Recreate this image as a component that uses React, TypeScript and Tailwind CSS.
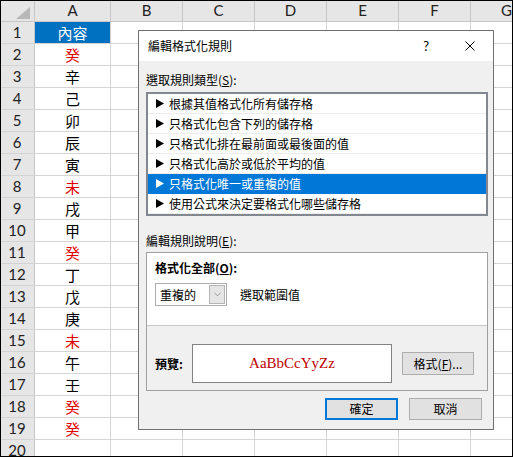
import { ChevronDown } from "lucide-react";

const cells: { text: string; red?: boolean }[] = [
  { text: "內容" },
  { text: "癸", red: true },
  { text: "辛" },
  { text: "己" },
  { text: "卯" },
  { text: "辰" },
  { text: "寅" },
  { text: "未", red: true },
  { text: "戌" },
  { text: "甲" },
  { text: "癸", red: true },
  { text: "丁" },
  { text: "戊" },
  { text: "庚" },
  { text: "未", red: true },
  { text: "午" },
  { text: "壬" },
  { text: "癸", red: true },
  { text: "癸", red: true },
  { text: "" },
];

const rules = [
  "根據其值格式化所有儲存格",
  "只格式化包含下列的儲存格",
  "只格式化排在最前面或最後面的值",
  "只格式化高於或低於平均的值",
  "只格式化唯一或重複的值",
  "使用公式來決定要格式化哪些儲存格",
];

const cjk = { fontFamily: '"Noto Sans CJK TC", "Noto Sans", sans-serif' };
const latin = { fontFamily: 'Lato, "Noto Sans", sans-serif' };

function Tri({ white }: { white?: boolean }) {
  return (
    <svg width="8" height="9" viewBox="0 0 8 9" className="shrink-0">
      <path d="M0 0 L8 4.5 L0 9 Z" fill={white ? "#ffffff" : "#000000"} />
    </svg>
  );
}

function Sheet() {
  const plain = "w-[72px] shrink-0 h-full border-r border-[#d4d4d4]";
  return (
    <div className="flex flex-col">
      <div className="flex h-[22px] bg-[#e6e6e6] border-b border-[#c6c6c6] text-[15px] text-[#222]" style={latin}>
        <div className="w-[35px] shrink-0 h-full border-r border-[#c6c6c6] flex items-end justify-end pr-[4px] pb-[2px]">
          <svg width="14" height="12" viewBox="0 0 14 12">
            <path d="M14 0 L14 12 L0 12 Z" fill="#b8b8b8" />
          </svg>
        </div>
        <div className="w-[76px] shrink-0 flex items-center justify-center border-r border-[#c6c6c6]">A</div>
        <div className="w-[72px] shrink-0 flex items-center justify-center border-r border-[#c6c6c6]">B</div>
        <div className="w-[72px] shrink-0 flex items-center justify-center border-r border-[#c6c6c6]">C</div>
        <div className="w-[72px] shrink-0 flex items-center justify-center border-r border-[#c6c6c6]">D</div>
        <div className="w-[72px] shrink-0 flex items-center justify-center border-r border-[#c6c6c6]">E</div>
        <div className="w-[72px] shrink-0 flex items-center justify-center border-r border-[#c6c6c6]">F</div>
        <div className="w-[72px] shrink-0 flex items-center justify-center border-r border-[#c6c6c6]">G</div>
      </div>
      {cells.map((c, i) => (
        <div key={i} className="flex h-[22px] border-b border-[#d4d4d4]">
          <div
            className="w-[35px] shrink-0 h-full bg-[#e6e6e6] border-r border-[#c6c6c6] flex items-center justify-center text-[15px] text-[#222]"
            style={latin}
          >
            {i + 1}
          </div>
          <div
            className={
              "w-[76px] shrink-0 h-full border-r border-[#d4d4d4] flex items-center justify-center text-[15px] leading-none " +
              (i === 0 ? "bg-[#0070c0] text-white" : c.red ? "text-[#e00000]" : "text-black")
            }
            style={cjk}
          >
            {c.text}
          </div>
          <div className={plain} />
          <div className={plain} />
          <div className={plain} />
          <div className={plain} />
          <div className={plain} />
          <div className={plain} />
        </div>
      ))}
    </div>
  );
}

function Dialog() {
  return (
    <div
      className="absolute left-[138px] top-[30px] w-[356px] h-[400px] border border-[#707070] bg-[#f0f0f0] flex flex-col text-[12px] text-black"
      style={cjk}
    >
      <div className="h-[30px] shrink-0 bg-white flex items-center pl-[9px]">
        <span className="leading-none">編輯格式化規則</span>
        <span className="ml-auto text-[13px] leading-none" style={latin}>?</span>
        <svg width="10" height="10" viewBox="0 0 10 10" className="ml-[36px] mr-[18px]">
          <path d="M0.5 0.5 L9.5 9.5 M9.5 0.5 L0.5 9.5" stroke="#000" strokeWidth="1" />
        </svg>
      </div>
      <div className="flex flex-col pl-[7px] pr-[5px]">
        <div className="mt-[11px] h-[16px] leading-[16px]">
          選取規則類型(<span className="underline">S</span>):
        </div>
        <div className="mt-[4px] h-[124px] border-2 border-[#828790] bg-white flex flex-col">
          {rules.map((r, i) => (
            <div
              key={i}
              className={
                "h-[20px] shrink-0 flex items-center gap-[5px] pl-[8px] border-b " +
                (i === 4 ? "bg-[#0078d7] text-white border-[#0078d7]" : "border-[#ececec]")
              }
            >
              <Tri white={i === 4} />
              <span className="leading-none">{r}</span>
            </div>
          ))}
        </div>
        <div className="mt-[17px] h-[16px] leading-[16px]">
          編輯規則說明(<span className="underline">E</span>):
        </div>
        <div className="mt-[3px] h-[139px] border border-[#a0a0a0] flex flex-col">
          <div className="h-[73px] shrink-0 bg-white border-b border-[#c8c8c8] flex flex-col pl-[8px] pt-[7px]">
            <div className="h-[16px] leading-[16px] font-semibold">
              格式化全部(<span className="underline">O</span>):
            </div>
            <div className="mt-[7px] flex items-center">
              <div className="w-[72px] h-[23px] border border-[#adadad] bg-white flex items-center pr-[1px]">
                <span className="pl-[4px] flex-1 leading-none">重複的</span>
                <div className="w-[16px] h-[19px] bg-[#e5e5e5] border border-[#b4b4b4] flex items-center justify-center">
                  <ChevronDown size={11} strokeWidth={1.2} color="#606060" />
                </div>
              </div>
              <span className="ml-[13px] leading-none">選取範圍值</span>
            </div>
          </div>
          <div className="flex items-center pl-[8px] pt-[18px]">
            <span className="w-[37px] font-semibold leading-none">預覽:</span>
            <div className="w-[200px] h-[39px] border border-[#828282] bg-white flex items-center justify-center">
              <span
                className="text-[15px] text-[#c00000]"
                style={{ fontFamily: '"Liberation Serif", serif' }}
              >
                AaBbCcYyZz
              </span>
            </div>
            <div className="ml-[10px] w-[72px] h-[23px] bg-[#e1e1e1] border border-[#adadad] flex items-center justify-center leading-none">
              格式(<span className="underline">F</span>)...
            </div>
          </div>
        </div>
        <div className="mt-[7px] flex justify-end gap-[11px] pr-[6px]">
          <div className="w-[73px] h-[22px] bg-[#e1e1e1] border-2 border-[#0078d7] flex items-center justify-center leading-none">
            確定
          </div>
          <div className="w-[73px] h-[22px] bg-[#e1e1e1] border border-[#adadad] flex items-center justify-center leading-none">
            取消
          </div>
        </div>
      </div>
    </div>
  );
}

export default function App() {
  return (
    <div className="relative w-[513px] h-[457px] overflow-hidden bg-white">
      <Sheet />
      <Dialog />
      <div className="absolute inset-0 border border-black pointer-events-none" />
    </div>
  );
}
